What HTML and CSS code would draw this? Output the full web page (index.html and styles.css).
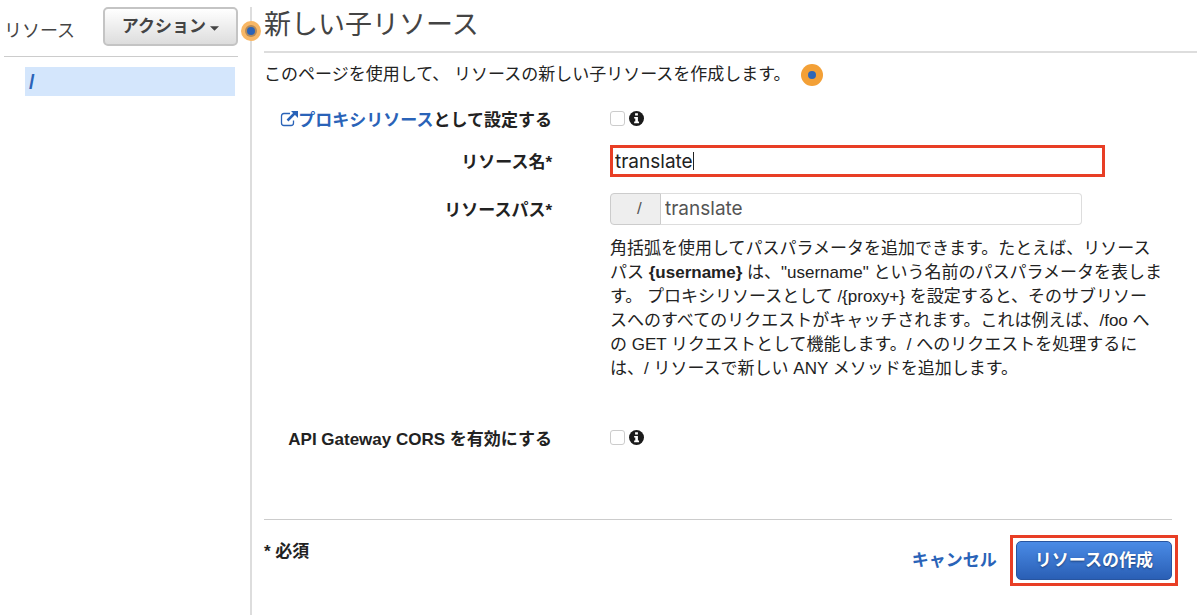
FILE: index.html
```html
<!DOCTYPE html>
<html lang="ja">
<head>
<meta charset="utf-8">
<title>新しい子リソース</title>
<link rel="stylesheet" href="styles.css">
</head>
<body>
<div class="app">
  <aside class="sidebar">
    <div class="sidebar-head">
      <span class="sidebar-title">リソース</span>
      <button class="btn btn-action" type="button">アクション<svg class="caret" viewBox="0 0 10 5" aria-hidden="true"><path d="M0 0h10L5 5z"/></svg></button>
    </div>
    <nav class="tree"><a class="tree-item" href="#">/</a></nav>
  </aside>
  <main class="main">
    <svg class="marker marker-divider" viewBox="0 0 22 22" aria-hidden="true"><circle cx="11" cy="11" r="10" fill="#f8b765"/><circle cx="11" cy="11" r="6" fill="#b58a58"/><circle cx="11" cy="11" r="4" fill="#2a63b8"/></svg>
    <h1 class="title">新しい子リソース</h1>
    <p class="intro">このページを使用して、 リソースの新しい子リソースを作成します。<svg class="marker" viewBox="0 0 22 22" aria-hidden="true"><circle cx="11" cy="11" r="11" fill="#f3a036"/><circle cx="11" cy="11" r="4" fill="#2e66b6"/></svg></p>
    <form class="form">
      <div class="row">
        <div class="label"><a class="link" href="#"><svg class="ext" viewBox="0 0 18 16" aria-hidden="true"><path d="M10 2.5H4Q1.500 2.500 1.500 5v7Q1.500 14.500 4 14.500h7q2.500 0 2.500-2.500V9.500" fill="none" stroke="currentColor" stroke-width="1.300"/><path d="M7.500 9.500 14.500 2.500" stroke="currentColor" stroke-width="2.500"/><path d="M11 0h7v7z" fill="currentColor"/></svg>プロキシリソース</a><label for="proxy">として設定する</label></div>
        <div class="check"><input class="box" type="checkbox" id="proxy"><svg class="info" viewBox="0 0 16 16" aria-hidden="true"><circle cx="8" cy="8" r="8" fill="#1a1a1a"/><path d="M6.500 2.500h3v2.300h-3zM5.500 6.300h4v4.900h1.200v1.800H5.500v-1.800h1.200V8.100H5.500z" fill="#fff"/></svg></div>
      </div>
      <div class="row">
        <label class="label field-label" for="name">リソース名*</label>
        <div class="name-field"><input class="text name" type="text" id="name" value="translate"><span class="cursor"></span></div>
      </div>
      <div class="row path-row">
        <label class="label field-label" for="path">リソースパス*</label>
        <div class="path-field"><span class="prefix">/</span><input class="text path" type="text" id="path" value="translate"></div>
      </div>
      <div class="row help-row">
        <p class="help">角括弧を使用してパスパラメータを追加できます。たとえば、リソース<br>パス <b>{username}</b> は、"username" という名前のパスパラメータを表しま<br>す。 プロキシリソースとして /{proxy+} を設定すると、そのサブリソー<br>スへのすべてのリクエストがキャッチされます。これは例えば、/foo へ<br>の GET リクエストとして機能します。/ へのリクエストを処理するに<br>は、/ リソースで新しい ANY メソッドを追加します。</p>
      </div>
      <div class="row">
        <label class="label" for="cors">API Gateway CORS を有効にする</label>
        <div class="check"><input class="box" type="checkbox" id="cors"><svg class="info" viewBox="0 0 16 16" aria-hidden="true"><circle cx="8" cy="8" r="8" fill="#1a1a1a"/><path d="M6.500 2.500h3v2.300h-3zM5.500 6.300h4v4.900h1.200v1.800H5.500v-1.800h1.200V8.100H5.500z" fill="#fff"/></svg></div>
      </div>
      <div class="footer">
        <span class="required">* 必須</span>
        <div class="actions">
          <a class="link" href="#">キャンセル</a>
          <span class="highlight"><button class="btn btn-primary" type="submit">リソースの作成</button></span>
        </div>
      </div>
    </form>
  </main>
</div>
</body>
</html>
```
FILE: styles.css
```css
* { box-sizing: border-box; }
body {
  margin: 0;
  background: #fff;
  color: #222;
  font: 17px/24px "Liberation Sans", "Noto Sans CJK JP", sans-serif;
}
.app { display: flex; min-height: 100vh; padding-top: 7px; }
.sidebar { flex: 0 0 250px; padding: 0 12px 0 4px; }
.sidebar-head {
  display: flex;
  align-items: center;
  justify-content: space-between;
  height: 50px;
  padding-bottom: 11px;
  border-bottom: 1px solid #ccc;
}
.sidebar-title { font-size: 18px; color: #444; padding-top: 10px; }
.btn {
  font: bold 17px/24px "Liberation Sans", "Noto Sans CJK JP", sans-serif;
  height: 39px;
  border-radius: 5px;
  padding: 0 18px;
  white-space: nowrap;
}
.btn-action {
  padding: 2px 17px 0;
  color: #444;
  border: 2px solid #c4c4c4;
  background: linear-gradient(#fff, #ddd);
}
.caret { width: 9px; height: 5px; margin-left: 4px; vertical-align: 1px; fill: #444; }
.tree { padding: 10px 3px 0 21px; }
.tree-item {
  display: block;
  height: 29px;
  padding: 3px 4px;
  background: #d4e6fc;
  color: #2a63b8;
  font-size: 20px;
  font-weight: bold;
  text-decoration: none;
}
.main {
  position: relative;
  flex: 1;
  min-width: 0;
  padding: 0 3px 0 12px;
  border-left: 2px solid #ddd;
}
.marker { width: 22px; height: 22px; }
.marker-divider { position: absolute; left: -12px; top: 13px; }
.title {
  margin: 0;
  height: 46px;
  border-bottom: 2px solid #ddd;
  color: #444;
  font-size: 27px;
  font-weight: normal;
  line-height: 36px;
}
.intro { display: flex; align-items: center; gap: 10px; margin: 10px 0 22px; }
.form { margin-right: 25px; }
.row {
  display: grid;
  grid-template-columns: 288px minmax(0, 1fr);
  column-gap: 58px;
  align-items: start;
  margin-bottom: 12px;
}
.label { text-align: right; font-weight: bold; white-space: nowrap; }
.field-label { padding-top: 6px; }
.link { color: #2a63b8; font-weight: bold; text-decoration: none; }
.ext { width: 18px; height: 16px; vertical-align: -1px; }
.check { display: flex; align-items: center; gap: 4px; height: 24px; padding-bottom: 6px; }
.box {
  appearance: none;
  width: 15px;
  height: 15px;
  margin: 0;
  border: 1px solid #ccc;
  border-radius: 3px;
  background: #fff;
}
.info { width: 15px; height: 15px; }
.text {
  min-width: 0;
  height: 32px;
  padding: 0 4px 2px;
  background: #fff;
  outline: 0;
  font: 19px/24px Inter, sans-serif;
}
.name-field { display: flex; position: relative; width: 88%; }
.name { width: 100%; border: 3px solid #e83e25; color: #222; padding: 0 2px; }
.cursor { position: absolute; left: 83px; top: 7px; width: 1px; height: 18px; background: #222; }
.path-row { margin-top: 16px; }
.path-field { display: flex; width: 84%; }
.prefix {
  flex: 0 0 51px;
  height: 32px;
  padding: 3px 0 0 26px;
  border: 1px solid #ccc;
  border-radius: 4px 0 0 4px;
  background: #eee;
  color: #555;
}
.path { flex: 1; border: 1px solid #ddd; border-left: 0; border-radius: 0 4px 4px 0; color: #555; }
.help-row { margin-bottom: 47px; }
.help { grid-column: 2; margin: 0; }
.footer {
  display: flex;
  align-items: flex-start;
  justify-content: space-between;
  margin-top: 67px;
  padding-top: 20px;
  border-top: 1px solid #ccc;
}
.required { font-weight: bold; }
.actions { display: flex; align-items: center; gap: 19px; }
.highlight { display: flex; margin: -5px -6px; border: 3px solid #e83e25; padding: 3px; }
.actions .link { margin-right: 6px; }
.actions { gap: 13px; }
.btn-primary {
  color: #fff;
  border: 1px solid #2855a0;
  background: linear-gradient(#4a8be6, #2a5fb5);
  text-shadow: 0 1px 2px #1c3f78;
}
```
